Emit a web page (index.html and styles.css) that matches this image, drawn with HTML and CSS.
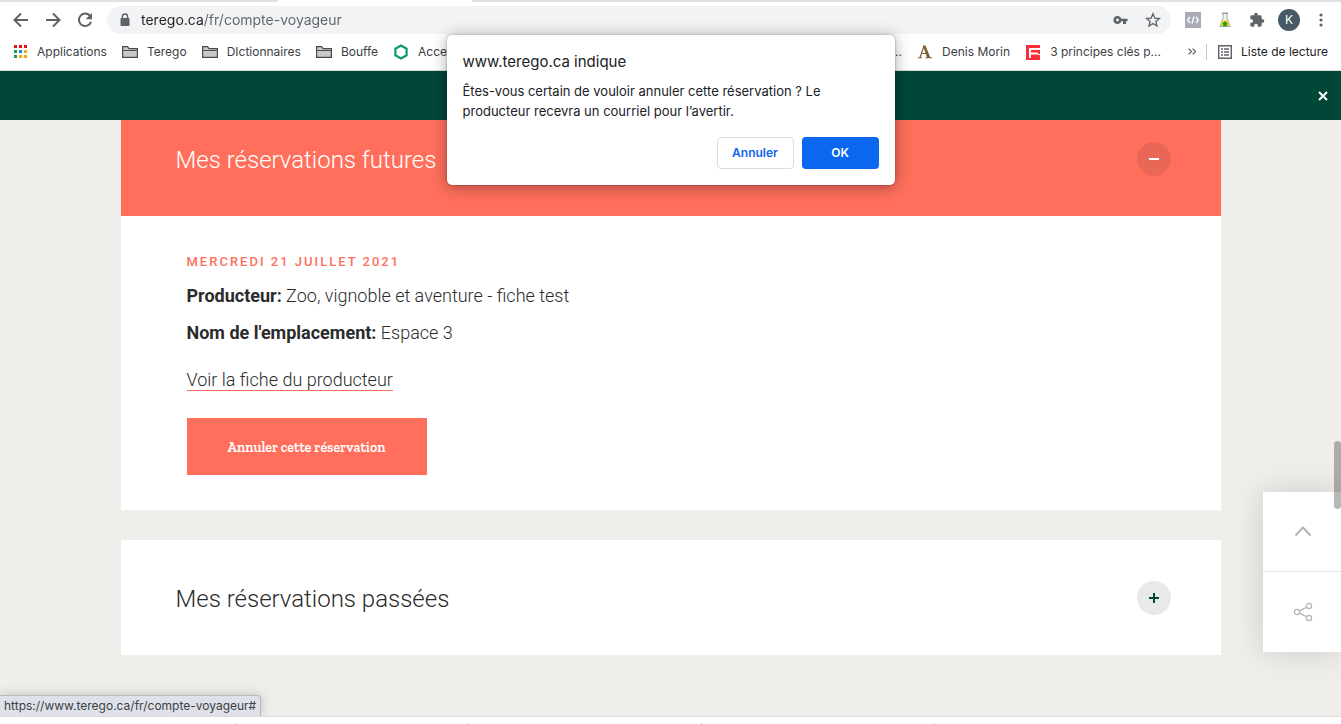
FILE: index.html
```html
<!DOCTYPE html>
<html lang="fr">
<head>
  <meta charset="UTF-8">
  <meta name="viewport" content="width=device-width, initial-scale=1.0">
  <title>Compte voyageur</title>
  <link rel="stylesheet" href="styles.css">
</head>
<body>
  <!-- Barre du navigateur -->
  <header class="browser">
    <div class="tabs"><span class="tab-left"></span><span class="tab-active"></span><span class="tab-right"></span></div>
    <div class="toolbar">
      <button class="nav-btn" aria-label="Retour">
        <svg width="16" height="16" viewBox="0 0 16 16"><path d="M15 8H2M8 1.5L1.5 8L8 14.5" fill="none" stroke="#5f6368" stroke-width="2"/></svg>
      </button>
      <button class="nav-btn" aria-label="Avancer">
        <svg width="16" height="16" viewBox="0 0 16 16"><path d="M1 8h13M8 1.5L14.5 8L8 14.5" fill="none" stroke="#5f6368" stroke-width="2"/></svg>
      </button>
      <button class="nav-btn" aria-label="Actualiser">
        <svg width="16" height="16" viewBox="0 0 16 16"><path d="M13.2 4.2A6.2 6.2 0 1 0 14 9.8" fill="none" stroke="#5f6368" stroke-width="2"/><path d="M15 1v6.3H8.7z" fill="#5f6368"/></svg>
      </button>
      <div class="address">
        <svg width="10" height="14" viewBox="0 0 10 14"><path d="M2.4 6V3.6a2.6 2.6 0 0 1 5.2 0V6" fill="none" stroke="#5f6368" stroke-width="1.4"/><rect x="0.5" y="5" width="9" height="8" rx="1" fill="#5f6368"/></svg>
        <input type="text" class="url" aria-label="Adresse" value="terego.ca/fr/compte-voyageur">
        <svg width="15" height="10" viewBox="0 0 15 10"><path fill="#5f6368" fill-rule="evenodd" d="M4.5 1a4 4 0 1 0 3.8 5.2H10V9h3V6.2h1.5V3.8H8.3A4 4 0 0 0 4.5 1zM4.5 3.6a1.4 1.4 0 1 1 0 2.8a1.4 1.4 0 0 1 0-2.8z"/></svg>
        <svg width="16" height="16" viewBox="0 0 16 16"><path d="M8 1.8l1.8 4.3l4.6.4l-3.5 3l1.1 4.5L8 11.6L4 14l1.1-4.5l-3.5-3l4.6-.4z" fill="none" stroke="#5f6368" stroke-width="1.3"/></svg>
      </div>
      <div class="extensions">
        <svg width="16" height="16" viewBox="0 0 16 16"><rect width="16" height="16" fill="#aaabb9"/><path d="M5 5L2.500 8L5 11M11 5l2.500 3L11 11M9 4.500L7 11.500" fill="none" stroke="#fff" stroke-width="1.3"/></svg>
        <svg width="12" height="16" viewBox="0 0 12 16"><path d="M4 1.500v5L.8 14.500h10.400L8 6.500v-5" fill="#eef3f5" stroke="#9aa7ad"/><path d="M3.300 8.500h5.400l2.200 5.500H1.100z" fill="#f5d21a"/><path d="M4.200 14v-2H3l3-3l3 3H7.800v2z" fill="#16a010"/><path d="M3 1.200h6" stroke="#879197" stroke-width="1.3"/></svg>
        <svg width="16" height="16" viewBox="0 0 24 24"><path fill="#5f6368" d="M20.500 11H19V7a2 2 0 0 0-2-2h-4V3.500a2.500 2.500 0 0 0-5 0V5H4a2 2 0 0 0-2 2v3.800h1.500a2.700 2.700 0 0 1 0 5.400H2V20a2 2 0 0 0 2 2h3.800v-1.500a2.700 2.700 0 0 1 5.400 0V22H17a2 2 0 0 0 2-2v-4h1.500a2.500 2.500 0 0 0 0-5z"/></svg>
        <span class="avatar">K</span>
        <svg width="4" height="14" viewBox="0 0 4 14" fill="#5f6368"><circle cx="2" cy="2" r="1.6"/><circle cx="2" cy="7" r="1.6"/><circle cx="2" cy="12" r="1.6"/></svg>
      </div>
    </div>
    <nav class="bookmarks">
      <a href="#">
        <svg width="14" height="14" viewBox="0 0 14 14"><path fill="#f00a17" d="M0 0h3v3H0zM5 0h3v3H5zM10 0h3v3h-3z"/><path fill="#12a150" d="M0 5h3v3H0zM0 10h3v3H0z"/><path fill="#1a8cf0" d="M5 5h3v3H5z"/><path fill="#f7a80b" d="M10 5h3v3h-3zM5 10h3v3H5zM10 10h3v3h-3z"/></svg>
        Applications</a>
      <a href="#">
        <svg width="16" height="14" viewBox="0 0 16 14"><path d="M.6 12.400V1.600h5l1.500 2h8.300v8.800z" fill="#c8c8c8" stroke="#4a4a4a" stroke-width="1.2"/><path d="M1.200 5.500h13.600" stroke="#4a4a4a"/></svg>
        Terego</a>
      <a href="#">
        <svg width="16" height="14" viewBox="0 0 16 14"><path d="M.6 12.400V1.600h5l1.500 2h8.300v8.800z" fill="#c8c8c8" stroke="#4a4a4a" stroke-width="1.2"/><path d="M1.200 5.500h13.600" stroke="#4a4a4a"/></svg>
        DIctionnaires</a>
      <a href="#">
        <svg width="16" height="14" viewBox="0 0 16 14"><path d="M.6 12.400V1.600h5l1.500 2h8.300v8.800z" fill="#c8c8c8" stroke="#4a4a4a" stroke-width="1.2"/><path d="M1.200 5.500h13.600" stroke="#4a4a4a"/></svg>
        Bouffe</a>
      <a href="#">
        <svg width="16" height="16" viewBox="0 0 16 16"><path d="M8 1.500l5.600 3.200v6.600L8 14.500l-5.600-3.200V4.700z" fill="none" stroke="#0a9f64" stroke-width="2.2"/></svg>
        Acce</a>
      <a href="#" class="push">..</a>
      <a href="#">
        <svg width="16" height="16" viewBox="0 0 16 16"><path d="M7 2L3 13.500M4.500 9.500h5" fill="none" stroke="#80603c" stroke-width="1.2"/><path d="M6 1.500h2.500L13.500 14H10zM1 13.200h4v1H1zM8.500 13.200H15v1H8.500z" fill="#80603c"/></svg>
        Denis Morin</a>
      <a href="#">
        <svg width="16" height="16" viewBox="0 0 16 16"><path d="M1 1h14v15H1z" fill="#fb2b37"/><path d="M4 4h11v2H6v2.500h7v2H6V14H4z" fill="#fff"/><path d="M13 10.500h2" stroke="#fff"/></svg>
        3 principes clés p...</a>
      <button class="more" aria-label="Autres favoris">
        <svg width="8" height="7" viewBox="0 0 8 7"><path d="M.6.6L3.500 3.500L.6 6.400M4.600.6L7.500 3.500L4.600 6.400" fill="none" stroke="#5f6368" stroke-width="1.3"/></svg>
      </button>
      <a href="#" class="reading">
        <svg width="14" height="14" viewBox="0 0 14 14"><path d="M.7.7h12.600v12.600H.7z" fill="none" stroke="#5f6368" stroke-width="1.4"/><path d="M3 4h2M3 7h2M3 10h2M6 4h5M6 7h5M6 10h5" stroke="#5f6368" stroke-width="1.4"/></svg>
        Liste de lecture</a>
    </nav>
  </header>

  <!-- Page du site -->
  <main class="page">
    <div class="banner">
      <button class="close" aria-label="Fermer">
        <svg width="10" height="10" viewBox="0 0 10 10"><path d="M1 1l8 8M9 1L1 9" stroke="#fff" stroke-width="2"/></svg>
      </button>
    </div>

    <div class="container">
      <section class="panel open">
        <div class="panel-head">
          <h2>Mes réservations futures</h2>
          <button class="toggle" aria-label="Replier">
            <svg width="10" height="10" viewBox="0 0 10 10"><path d="M0 5h10" stroke="#fff" stroke-width="2"/></svg>
          </button>
        </div>
        <div class="panel-body">
          <h3>Mercredi 21 juillet 2021</h3>
          <p><strong>Producteur:</strong> Zoo, vignoble et aventure - fiche test</p>
          <p><strong>Nom de l'emplacement:</strong> Espace 3</p>
          <p class="more-link"><a href="#">Voir la fiche du producteur</a></p>
          <button class="btn-cancel">Annuler cette réservation</button>
        </div>
      </section>

      <section class="panel">
        <div class="panel-head">
          <h2>Mes réservations passées</h2>
          <button class="toggle" aria-label="Déplier">
            <svg width="10" height="10" viewBox="0 0 10 10"><path d="M0 5h10M5 0v10" stroke="#004738" stroke-width="2"/></svg>
          </button>
        </div>
      </section>
    </div>

    <div class="side-tools">
      <button aria-label="Haut de page">
        <svg width="18" height="12" viewBox="0 0 18 12"><path d="M1.500 9.500L9 1.500l7.500 8" fill="none" stroke="#b4b4b4" stroke-width="2"/></svg>
      </button>
      <button aria-label="Partager">
        <svg width="20" height="20" viewBox="0 0 20 20" fill="none" stroke="#b4b4b4" stroke-width="1.2"><circle cx="4" cy="10" r="2.600"/><circle cx="16" cy="4" r="2.600"/><circle cx="16" cy="16" r="2.600"/><path d="M6.300 8.900l7.400-3.700M6.300 11.100l7.400 3.700"/></svg>
      </button>
    </div>
    <div class="scroll-thumb"></div>
    <div class="status">https://www.terego.ca/fr/compte-voyageur#</div>
  </main>

  <footer class="downloads"><span></span><span></span><span></span><span></span></footer>

  <!-- Confirmation -->
  <dialog open class="confirm">
    <h1>www.terego.ca indique</h1>
    <p>Êtes-vous certain de vouloir annuler cette réservation ? Le producteur recevra un courriel pour l’avertir.</p>
    <div class="actions">
      <button class="cancel">Annuler</button>
      <button class="ok">OK</button>
    </div>
  </dialog>
</body>
</html>
```
FILE: styles.css
```css
* {
  box-sizing: border-box;
}
body {
  margin: 0;
  height: 100vh;
  overflow: hidden;
  display: flex;
  flex-direction: column;
  font-family: Inter, "Liberation Sans", sans-serif;
  color: #2b2b2b;
}
h1, h2, h3, p {
  margin: 0;
}
button {
  padding: 0;
  border: none;
  background: none;
  font-family: inherit;
  cursor: pointer;
}
svg {
  display: block;
  flex: none;
}

/* Navigateur */
.browser {
  flex: none;
  background: #fff;
  border-bottom: 1px solid #dadce0;
}
.tabs {
  display: flex;
  height: 2px;
}
.tab-left {
  width: 278px;
  background: #dee1e6;
}
.tab-active {
  width: 194px;
}
.tab-right {
  flex: 1;
  background: #dee1e6;
}
.toolbar {
  display: flex;
  align-items: center;
  height: 36px;
  padding: 0 18px 0 13px;
}
.nav-btn {
  width: 16px;
  margin-right: 16px;
}
.address {
  flex: 1;
  display: flex;
  align-items: center;
  gap: 17px;
  height: 28px;
  margin-left: -2px;
  padding: 0 10px 0 13px;
  border-radius: 14px;
  background: #f1f3f4;
}
.url {
  flex: 1;
  min-width: 0;
  margin-left: -6px;
  padding: 0;
  border: none;
  outline: none;
  font-family: inherit;
  font-size: 14px;
  line-height: 20px;
  color: #5f6368;
  /* domaine en noir, chemin en gris */
  background: linear-gradient(to right, #202124 63px, #5f6368 63px);
  -webkit-background-clip: text;
  background-clip: text;
  -webkit-text-fill-color: transparent;
}
.extensions {
  display: flex;
  align-items: center;
  gap: 18px;
  margin-left: 14px;
}
.avatar {
  width: 22px;
  height: 22px;
  margin: 0 1px 0 -5px;
  border-radius: 50%;
  background: #455a64;
  color: #fff;
  font-size: 12px;
  line-height: 22px;
  text-align: center;
}
.bookmarks {
  display: flex;
  align-items: center;
  height: 32px;
  padding: 0 13px 5px 14px;
  font-size: 12px;
  white-space: nowrap;
}
.bookmarks a {
  display: flex;
  align-items: center;
  gap: 9px;
  margin-right: 15px;
  color: #3c4043;
  text-decoration: none;
}
.bookmarks .push {
  margin-left: auto;
}
.more {
  margin: 0 10px 0 12px;
}
.bookmarks .reading {
  height: 16px;
  margin-right: 0;
  padding-left: 11px;
  border-left: 1px solid #c4c7cb;
  color: #202124;
}

/* Page */
.page {
  position: relative;
  flex: 1;
  min-height: 0;
  overflow: hidden;
  background: #efeeea;
}
.banner {
  position: relative;
  z-index: 1;
  display: flex;
  align-items: center;
  justify-content: flex-end;
  height: 49px;
  padding-right: 13px;
  background: #004738;
}
.container {
  max-width: 1100px;
  margin: -19px auto 0;
}
.panel {
  margin-bottom: 30px;
  background: #fff;
}
.panel-head {
  display: flex;
  align-items: center;
  justify-content: space-between;
  height: 115px;
  padding: 0 50px 0 55px;
}
.panel h2 {
  padding-top: 2px;
  font-family: Roboto, sans-serif;
  font-size: 24px;
  font-weight: 300;
  line-height: 32px;
}
.open .panel-head {
  background: #ff6f5c;
  color: #fff;
}
.toggle {
  display: flex;
  align-items: center;
  justify-content: center;
  width: 34px;
  height: 34px;
  border-radius: 50%;
  background: rgba(43, 43, 43, 0.1);
}
.panel-body {
  padding: 31px 66px 35px;
  font-family: Roboto, sans-serif;
  font-size: 18px;
  font-weight: 300;
  line-height: 37px;
}
.panel-body h3 {
  color: #ff6f5c;
  font-size: 13px;
  font-weight: 500;
  letter-spacing: 2px;
  line-height: 30px;
  text-transform: uppercase;
}
.panel-body strong {
  font-weight: 700;
}
.more-link {
  margin: 10px 0 20px;
}
.more-link a {
  color: inherit;
  text-decoration: none;
  border-bottom: 1px solid #ff6f5c;
}
.btn-cancel {
  display: block;
  width: 240px;
  height: 57px;
  padding-top: 2px;
  background: #ff6f5c;
  color: #fff;
  font-family: "Zilla Slab", "Liberation Serif", serif;
  font-size: 14px;
  font-weight: 600;
}

/* Outils flottants */
.side-tools {
  position: absolute;
  right: 0;
  bottom: 64px;
  width: 78px;
  background: #fff;
  box-shadow: 0 0 30px rgba(0, 0, 0, 0.15);
}
.side-tools button {
  display: flex;
  align-items: center;
  justify-content: center;
  width: 100%;
  height: 80px;
  padding-left: 2px;
}
.side-tools button:first-child {
  border-bottom: 1px solid #e4e4e4;
}
.scroll-thumb {
  position: absolute;
  right: 0;
  top: 370px;
  width: 7px;
  height: 68px;
  border-radius: 4px;
  background: rgba(0, 0, 0, 0.28);
}
.status {
  position: absolute;
  left: 0;
  bottom: 0;
  padding: 0 4px;
  border: 1px solid #b8babd;
  border-width: 1px 1px 0 0;
  border-radius: 0 4px 0 0;
  background: #dee1e9;
  box-shadow: 0 0 12px rgba(0, 0, 0, 0.2);
  font-size: 12px;
  line-height: 20px;
  color: #3c4043;
}
.downloads {
  flex: none;
  display: flex;
  align-items: flex-end;
  gap: 232px;
  height: 8px;
  padding-left: 235px;
  border-top: 1px solid #dadce0;
  background: #fff;
}
.downloads span {
  width: 1px;
  height: 1px;
  background: #b8babd;
}

/* Boîte de dialogue */
.confirm {
  position: absolute;
  z-index: 10;
  top: 35px;
  width: 448px;
  margin: 0 auto;
  padding: 16px;
  border: none;
  border-radius: 5px;
  background: #fff;
  box-shadow: 0 2px 16px rgba(0, 0, 0, 0.35), 0 0 2px rgba(0, 0, 0, 0.4);
  color: #202124;
}
.confirm h1 {
  font-size: 15px;
  font-weight: 400;
  line-height: 22px;
}
.confirm p {
  margin: 8px 0 16px;
  font-size: 13px;
  line-height: 20px;
}
.actions {
  display: flex;
  justify-content: flex-end;
  gap: 8px;
}
.actions button {
  width: 77px;
  height: 32px;
  padding-bottom: 2px;
  border-radius: 4px;
  font-size: 12px;
  font-weight: 600;
}
.actions .cancel {
  border: 1px solid #dadce0;
  color: #0b66f0;
}
.actions .ok {
  background: #0b66f0;
  color: #fff;
}
```
